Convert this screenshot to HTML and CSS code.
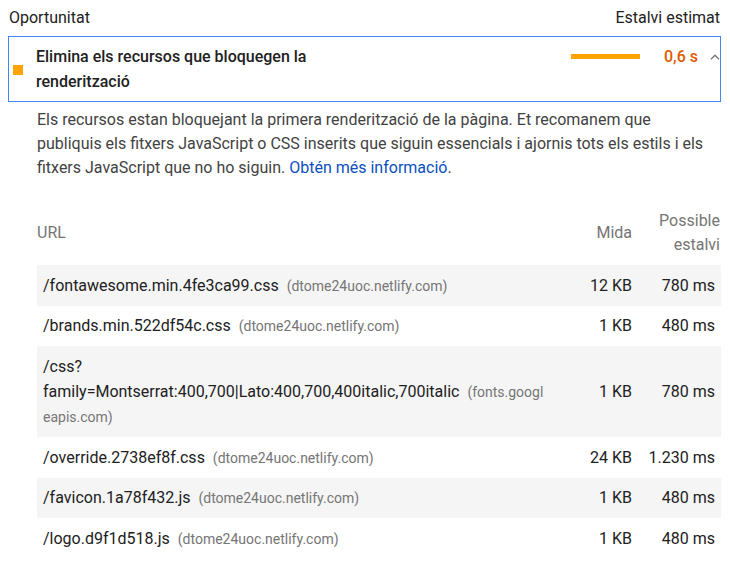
FILE: index.html
```html
<!DOCTYPE html>
<html lang="ca">
<head>
<meta charset="utf-8">
<title>Oportunitat</title>
<link rel="stylesheet" href="styles.css">
</head>
<body>
<div class="report">
  <div class="group-header">
    <span>Oportunitat</span>
    <span>Estalvi estimat</span>
  </div>
  <div class="audit">
    <div class="audit-summary">
      <span class="audit-icon"></span>
      <span class="audit-title">Elimina els recursos que bloquegen la<br>renderització</span>
      <span class="audit-bar"></span>
      <span class="audit-value">0,6 s</span>
      <svg class="chevron" width="10" height="6" viewBox="0 0 10 6"><path d="M1 5.2 L5 1.2 L9 5.2" fill="none" stroke="#757575" stroke-width="1.3"/></svg>
    </div>
  </div>
  <div class="audit-body">
    <p class="description">Els recursos estan bloquejant la primera renderització de la pàgina. Et recomanem que publiquis els fitxers JavaScript o CSS inserits que siguin essencials i ajornis tots els estils i els fitxers JavaScript que no ho siguin. <a href="#">Obtén més informació</a>.</p>
    <table class="details">
      <thead>
        <tr>
          <th class="col-url">URL</th>
          <th class="col-size">Mida</th>
          <th class="col-save">Possible estalvi</th>
        </tr>
      </thead>
      <tbody>
        <tr class="odd">
          <td class="col-url">/fontawesome.min.4fe3ca99.css <span class="host">(dtome24uoc.netlify.com)</span></td>
          <td class="col-size">12 KB</td>
          <td class="col-save">780 ms</td>
        </tr>
        <tr>
          <td class="col-url">/brands.min.522df54c.css <span class="host">(dtome24uoc.netlify.com)</span></td>
          <td class="col-size">1 KB</td>
          <td class="col-save">480 ms</td>
        </tr>
        <tr class="odd">
          <td class="col-url">/css?<br>family=Montserrat:400,700|Lato:400,700,400italic,700italic <span class="host">(fonts.googl<br>eapis.com)</span></td>
          <td class="col-size">1 KB</td>
          <td class="col-save">780 ms</td>
        </tr>
        <tr>
          <td class="col-url">/override.2738ef8f.css <span class="host">(dtome24uoc.netlify.com)</span></td>
          <td class="col-size">24 KB</td>
          <td class="col-save">1.230 ms</td>
        </tr>
        <tr class="odd">
          <td class="col-url">/favicon.1a78f432.js <span class="host">(dtome24uoc.netlify.com)</span></td>
          <td class="col-size">1 KB</td>
          <td class="col-save">480 ms</td>
        </tr>
        <tr>
          <td class="col-url">/logo.d9f1d518.js <span class="host">(dtome24uoc.netlify.com)</span></td>
          <td class="col-size">1 KB</td>
          <td class="col-save">480 ms</td>
        </tr>
      </tbody>
    </table>
  </div>
</div>
</body>
</html>
```
FILE: styles.css
```css
html, body {
  margin: 0;
  padding: 0;
  background: #ffffff;
}
body {
  padding: 8px;
  font-family: Roboto, "Liberation Sans", sans-serif;
  font-size: 16px;
  line-height: 24px;
  color: #212121;
}
.report {
  width: 714px;
}
.group-header {
  display: flex;
  justify-content: space-between;
  height: 28px;
  line-height: 20px;
  padding-left: 1px;
  padding-right: 2px;
  font-size: 16px;
  color: #212121;
}
.audit {
  border: 1px solid #4285f4;
  width: 711px;
}
.audit-summary {
  display: flex;
  align-items: center;
  padding: 7px 0 7px 4px;
}
.audit-icon {
  width: 10px;
  height: 10px;
  background: #ffa400;
  flex: none;
  margin-right: 13px;
  margin-top: 2px;
}
.audit-title {
  flex: 1;
  font-weight: 500;
  font-size: 16px;
  line-height: 25px;
  color: #212121;
}
.audit-bar {
  align-self: flex-start;
  margin-top: 10px;
  width: 69px;
  height: 5px;
  background: #ffa400;
  flex: none;
  margin-right: 24px;
}
.audit-value {
  align-self: flex-start;
  color: #e05a00;
  font-weight: 500;
  font-size: 16px;
  line-height: 25px;
  margin-right: 12px;
}
.chevron {
  align-self: flex-start;
  margin-top: 10px;
  margin-right: 0;
}
.audit-body {
  padding-left: 29px;
}
.description {
  margin: 6px 0 0 0;
  max-width: 672px;
  color: #424242;
  font-size: 16px;
  line-height: 24px;
}
.description a {
  color: #0b4fbf;
  text-decoration: none;
}
.details {
  margin-top: 21px;
  width: 684px;
  border-collapse: collapse;
  font-size: 16px;
}
.details th {
  font-weight: 400;
  color: #757575;
  padding: 8px 6px;
  line-height: 24px;
  vertical-align: middle;
}
.details th.col-url {
  text-align: left;
  padding-left: 0;
}
.details th.col-size {
  text-align: right;
  padding-right: 12px;
}
.details th.col-save {
  text-align: right;
  width: 64px;
  padding-left: 12px;
  padding-right: 1px;
}
.details td {
  padding: 7.7px 6px;
  line-height: 25.2px;
  vertical-align: middle;
}
.details tr.odd td {
  background: #f5f5f5;
}
.details td.col-url {
  text-align: left;
}
.details td.col-size {
  text-align: right;
  padding-right: 12px;
  white-space: nowrap;
}
.details td.col-save {
  text-align: right;
  padding-left: 0;
  padding-right: 6px;
  white-space: nowrap;
}
.host {
  color: #757575;
  font-size: 14px;
  line-height: 14px;
  margin-left: 4px;
}
```
